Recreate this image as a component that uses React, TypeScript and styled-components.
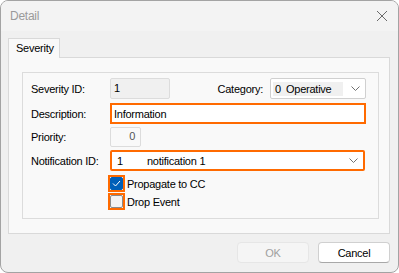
import React from "react";
import styled, { createGlobalStyle } from "styled-components";

const GlobalStyle = createGlobalStyle`
  html, body {
    margin: 0;
    padding: 0;
    background: #ffffff;
  }
  body {
    font-family: "Liberation Sans", Arial, sans-serif;
    font-size: 11px;
    letter-spacing: -0.25px;
    color: #000;
  }
`;

const orange = "#ff6a00";

const Window = styled.div`
  width: 399px;
  height: 273px;
  box-sizing: border-box;
  border: 1px solid #a3a3a3;
  border-radius: 8px;
  overflow: hidden;
  background: #f0f0f0;
  display: flex;
  flex-direction: column;
`;

const TitleBar = styled.div`
  height: 30px;
  flex-shrink: 0;
  background: #f3f3f3;
  display: flex;
  align-items: center;
  justify-content: space-between;
  padding: 0 9px 0 9px;
  font-size: 12px;
  color: #9a9a9a;
`;

const CloseButton = styled.div`
  width: 12px;
  height: 12px;
  margin-right: 1px;
  display: flex;
`;

const Body = styled.div`
  flex: 1;
  display: flex;
  flex-direction: column;
  padding: 7px 8px 0 7px;
`;

const TabStrip = styled.div`
  display: flex;
  height: 20px;
  position: relative;
  z-index: 1;
`;

const Tab = styled.div`
  width: 52px;
  height: 20px;
  box-sizing: border-box;
  background: #f9f9f9;
  border: 1px solid #d9d9d9;
  border-bottom: none;
  padding: 3px 0 0 7px;
`;

const Panel = styled.div`
  height: 177px;
  box-sizing: border-box;
  margin-top: -1px;
  background: #f9f9f9;
  border: 1px solid #d9d9d9;
  padding: 14px 10px 14px 13px;
  display: flex;
`;

const Group = styled.div`
  flex: 1;
  border: 1px solid #dcdcdc;
  padding: 5px 12px 0 8px;
  display: flex;
  flex-direction: column;
`;

const Row = styled.div<{ $top: number; $h: number }>`
  display: flex;
  align-items: center;
  height: ${(p) => p.$h}px;
  margin-top: ${(p) => p.$top}px;
`;

const Label = styled.div<{ $w?: number }>`
  width: ${(p) => (p.$w ? `${p.$w}px` : "auto")};
  flex-shrink: 0;
  white-space: nowrap;
`;

const ReadOnlyBox = styled.div<{ $w: number; $right?: boolean }>`
  width: ${(p) => p.$w}px;
  height: 100%;
  box-sizing: border-box;
  background: ${(p) => (p.$right ? "#f9f9f9" : "#f0f0f0")};
  border: 1px solid #dcdcdc;
  border-radius: 2px;
  display: flex;
  align-items: center;
  justify-content: ${(p) => (p.$right ? "flex-end" : "flex-start")};
  padding: 0 5px 2px 3px;
`;

const Spacer = styled.div`
  flex: 1;
`;

const Combo = styled.div<{ $w?: number; $focused?: boolean }>`
  width: ${(p) => (p.$w ? `${p.$w}px` : "auto")};
  flex: ${(p) => (p.$w ? "none" : "1")};
  height: 100%;
  box-sizing: border-box;
  background: #fff;
  border: ${(p) => (p.$focused ? `2px solid ${orange}` : "1px solid #d0d0d0")};
  border-radius: 2px;
  display: flex;
  align-items: center;
  padding: ${(p) => (p.$focused ? "0 5px 0 3px" : "0 5px 0 2px")};
`;

const ComboValue = styled.div<{ $selected?: boolean }>`
  flex: 1;
  display: flex;
  align-items: center;
  height: 14px;
  padding-left: 2px;
  background: ${(p) => (p.$selected ? "#f0f0f0" : "transparent")};
  margin-right: 8px;
`;

const Code = styled.span<{ $w: number }>`
  display: inline-block;
  width: ${(p) => p.$w}px;
`;

const TextInput = styled.div`
  flex: 1;
  height: 100%;
  box-sizing: border-box;
  background: #fff;
  border: 2px solid ${orange};
  display: flex;
  align-items: center;
  padding: 0 0 0 2px;
`;

const CheckRow = styled.div<{ $top: number }>`
  display: flex;
  align-items: center;
  margin-top: ${(p) => p.$top}px;
  margin-left: 77px;
  height: 17px;
`;

const CheckFrame = styled.div`
  width: 17px;
  height: 17px;
  box-sizing: border-box;
  border: 2px solid ${orange};
  display: flex;
  align-items: center;
  justify-content: center;
  margin-right: 2px;
`;

const CheckBox = styled.div<{ $checked?: boolean }>`
  width: 13px;
  height: 13px;
  box-sizing: border-box;
  border-radius: 2px;
  background: ${(p) => (p.$checked ? "#005fb8" : "#f3f3f3")};
  border: 1px solid ${(p) => (p.$checked ? "#005fb8" : "#8a8a8a")};
  display: flex;
  align-items: center;
  justify-content: center;
`;

const Footer = styled.div`
  flex: 1;
  display: flex;
  justify-content: flex-end;
  align-items: flex-start;
  gap: 9px;
  padding-top: 8px;
`;

const Button = styled.div<{ $disabled?: boolean }>`
  width: 72px;
  height: 21px;
  box-sizing: border-box;
  border-radius: 4px;
  background: ${(p) => (p.$disabled ? "#f5f5f5" : "#ffffff")};
  border: 1px solid ${(p) => (p.$disabled ? "#e6e6e6" : "#d0d0d0")};
  border-bottom-color: ${(p) => (p.$disabled ? "#e6e6e6" : "#a8a8a8")};
  color: ${(p) => (p.$disabled ? "#a0a0a0" : "#000")};
  display: flex;
  align-items: center;
  justify-content: center;
`;

const Chevron = () => (
  <svg width="9" height="5" viewBox="0 0 9 5">
    <path d="M0.5 0.5 L4.5 4.5 L8.5 0.5" fill="none" stroke="#707070" strokeWidth="1" />
  </svg>
);

const App = () => {
  return (
    <>
      <GlobalStyle />
      <Window>
        <TitleBar>
          <span>Detail</span>
          <CloseButton>
            <svg width="12" height="12" viewBox="0 0 12 12">
              <path d="M1 1 L11 11 M11 1 L1 11" stroke="#6a6a6a" strokeWidth="1" />
            </svg>
          </CloseButton>
        </TitleBar>
        <Body>
          <TabStrip>
            <Tab>Severity</Tab>
          </TabStrip>
          <Panel>
            <Group>
              <Row $top={0} $h={21}>
                <Label $w={79}>Severity ID:</Label>
                <ReadOnlyBox $w={60}>1</ReadOnlyBox>
                <Spacer />
                <Label>Category:</Label>
                <Combo $w={96} style={{ marginLeft: 7 }}>
                  <ComboValue $selected>
                    <Code $w={11}>0</Code>Operative
                  </ComboValue>
                  <Chevron />
                </Combo>
              </Row>
              <Row $top={4} $h={21}>
                <Label $w={79}>Description:</Label>
                <TextInput>Information</TextInput>
              </Row>
              <Row $top={3} $h={20}>
                <Label $w={79}>Priority:</Label>
                <ReadOnlyBox $w={31} $right>
                  <span style={{ color: "#555" }}>0</span>
                </ReadOnlyBox>
              </Row>
              <Row $top={3} $h={21}>
                <Label $w={79}>Notification ID:</Label>
                <Combo $focused style={{ marginRight: 1 }}>
                  <ComboValue>
                    <Code $w={30}>1</Code>notification 1
                  </ComboValue>
                  <Chevron />
                </Combo>
              </Row>
              <CheckRow $top={4}>
                <CheckFrame>
                  <CheckBox $checked>
                    <svg width="9" height="7" viewBox="0 0 9 7">
                      <path d="M1 3.5 L3.5 6 L8 1" fill="none" stroke="#fff" strokeWidth="1" />
                    </svg>
                  </CheckBox>
                </CheckFrame>
                Propagate to CC
              </CheckRow>
              <CheckRow $top={1}>
                <CheckFrame>
                  <CheckBox />
                </CheckFrame>
                Drop Event
              </CheckRow>
            </Group>
          </Panel>
          <Footer>
            <Button $disabled>OK</Button>
            <Button>Cancel</Button>
          </Footer>
        </Body>
      </Window>
    </>
  );
};

export default App;
